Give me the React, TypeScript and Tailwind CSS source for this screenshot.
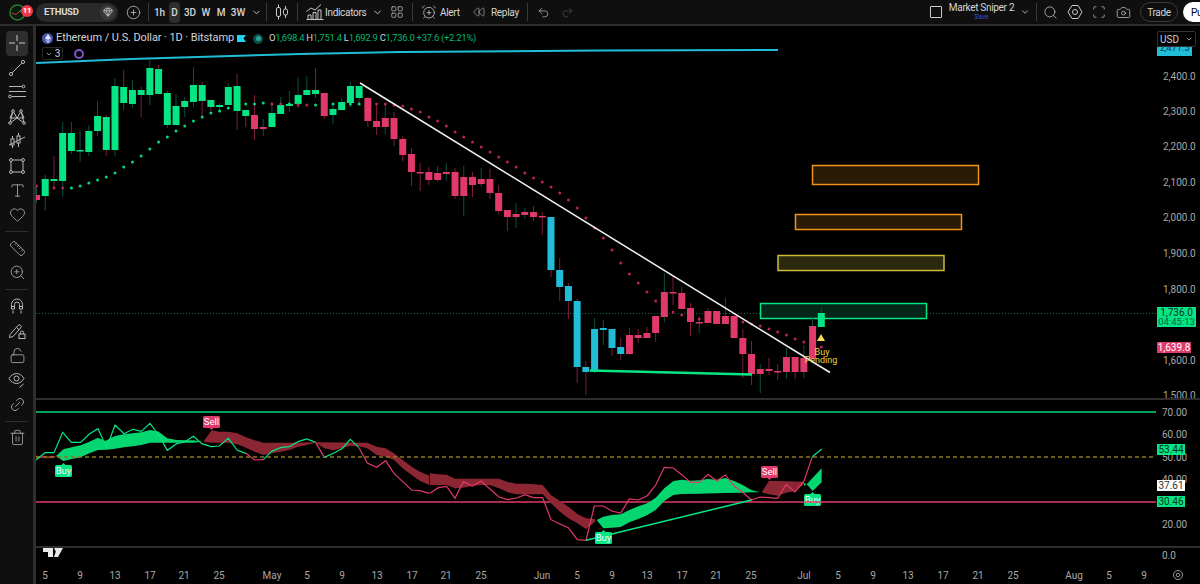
import type { ReactNode } from "react";
import {
  AlarmClockPlus,
  Camera,
  ChevronDown,
  CirclePlus,
  Gem,
  Heart,
  LayoutGrid,
  Link2,
  LockOpen,
  Redo2,
  Rewind,
  Ruler,
  Scan,
  Search,
  Trash2,
  Type,
  Undo2,
  ZoomIn,
} from "lucide-react";

const GREEN = "#05e584";
const RED = "#e03a6a";
const BLUE = "#20bcd8";
const WICK_GREEN = "#0d4f43";
const WICK_RED = "#7c1d3f";

// body top, body bottom, wick top, wick bottom, body colour, wick colour
type Bar = [number, number, number, number, "g" | "r" | "b", "g" | "r"];

const bars: Bar[] = [
  [195, 200, 186, 203, "r", "g"], [179, 196, 175, 211, "g", "g"], [179, 181, 156, 188, "g", "r"], [133, 181, 122, 197, "g", "g"],
  [133, 151, 122, 154, "g", "r"], [150, 151, 130, 162, "g", "g"], [131, 152, 125, 156, "g", "g"], [116, 131, 101, 136, "g", "g"],
  [117, 150, 115, 156, "g", "r"], [86, 150, 78, 156, "g", "g"], [87, 103, 70, 110, "g", "r"], [90, 104, 80, 108, "g", "g"],
  [90, 95, 87, 117, "g", "r"], [68, 95, 60, 105, "g", "g"], [69, 94, 65, 94, "g", "r"], [93, 125, 91, 128, "g", "r"],
  [106, 125, 94, 125, "g", "g"], [101, 107, 97, 117, "g", "g"], [85, 102, 67, 107, "g", "g"], [85, 101, 82, 116, "g", "r"],
  [100, 107, 100, 111, "g", "r"], [105, 107, 103, 112, "g", "g"], [87, 105, 83, 105, "g", "g"], [86, 111, 74, 130, "g", "r"],
  [110, 116, 110, 127, "g", "r"], [115, 129, 95, 140, "r", "r"], [127, 129, 119, 136, "r", "g"], [113, 127, 102, 127, "g", "g"],
  [105, 114, 97, 114, "g", "g"], [104, 106, 91, 112, "g", "g"], [95, 104, 77, 108, "g", "g"], [90, 95, 76, 95, "g", "g"],
  [90, 94, 68, 98, "g", "r"], [93, 116, 93, 119, "r", "r"], [109, 115, 103, 124, "g", "g"], [102, 110, 98, 110, "g", "g"],
  [86, 103, 82, 107, "g", "g"], [86, 98, 86, 103, "g", "r"], [98, 121, 97, 127, "r", "r"], [121, 127, 103, 135, "r", "r"],
  [118, 127, 103, 134, "r", "g"], [118, 139, 112, 146, "r", "r"], [139, 155, 136, 161, "r", "r"], [154, 172, 148, 186, "r", "r"],
  [172, 173, 163, 191, "r", "r"], [172, 180, 167, 185, "r", "r"], [173, 180, 166, 182, "r", "g"], [172, 174, 163, 181, "r", "g"],
  [172, 196, 168, 199, "r", "r"], [177, 196, 166, 216, "r", "g"], [177, 185, 172, 197, "r", "r"], [179, 184, 168, 187, "r", "g"],
  [179, 193, 169, 199, "r", "r"], [193, 211, 185, 214, "r", "r"], [210, 217, 210, 231, "r", "r"], [214, 217, 203, 228, "r", "g"],
  [212, 215, 208, 219, "r", "g"], [212, 217, 206, 221, "r", "r"], [216, 217, 212, 235, "r", "r"], [217, 270, 217, 277, "b", "r"],
  [270, 287, 258, 301, "b", "r"], [286, 301, 283, 319, "b", "r"], [301, 367, 299, 383, "b", "r"], [367, 372, 361, 395, "b", "r"],
  [329, 372, 318, 373, "b", "g"], [328, 330, 320, 345, "b", "g"], [329, 348, 329, 356, "b", "r"], [347, 354, 338, 360, "b", "r"],
  [335, 354, 328, 354, "r", "g"], [335, 338, 329, 343, "r", "r"], [333, 338, 327, 338, "r", "r"], [316, 333, 316, 342, "r", "g"],
  [292, 317, 273, 322, "r", "g"], [292, 293, 276, 305, "r", "r"], [293, 309, 287, 309, "r", "r"], [308, 322, 303, 336, "r", "r"],
  [322, 323, 317, 333, "r", "g"], [311, 323, 308, 323, "r", "g"], [311, 324, 311, 324, "r", "r"], [316, 324, 298, 324, "r", "g"],
  [316, 338, 313, 338, "r", "r"], [338, 354, 329, 378, "r", "r"], [354, 374, 341, 385, "r", "r"], [369, 374, 364, 393, "r", "g"],
  [369, 371, 358, 375, "r", "r"], [371, 372, 364, 380, "r", "r"], [357, 372, 348, 379, "r", "g"], [357, 372, 357, 379, "r", "r"],
  [358, 372, 345, 378, "r", "g"], [326, 359, 318, 359, "r", "g"], [313, 327, 307, 327, "g", "g"],
];

const barX = (i: number) => 36.5 + 8.72 * i;

// supertrend dots as [bar index, y]
const greenDots = [
  [4, 188], [5, 186], [6, 183], [7, 180], [8, 177], [9, 173], [10, 167], [11, 162], [12, 156], [13, 149], [14, 142],
  [15, 137], [16, 131], [17, 126], [18, 121], [19, 117], [20, 113], [21, 111], [22, 108], [24, 104], [25, 104], [26, 103],
  [29, 104], [32, 105], [34, 104], [36, 104], [37, 104],
];
const redDots = [
  [0, 186], [2, 188], [3, 188], [27, 104], [28, 104], [30, 105], [31, 105], [39, 104], [40, 104], [41, 105], [42, 106],
  [43, 109], [44, 112], [45, 117], [46, 121], [47, 126], [48, 132], [49, 137], [50, 142], [51, 147], [52, 152], [53, 157],
  [54, 162], [55, 167], [56, 173], [57, 178], [58, 182], [59, 187], [60, 193], [61, 200], [62, 208], [63, 218], [64, 228],
  [65, 238], [66, 250], [67, 263], [68, 274], [69, 283], [70, 292], [71, 301], [73, 312], [74, 315], [76, 319], [81, 322],
  [82, 324], [83, 326], [84, 329], [85, 332], [86, 335], [87, 339], [88, 342], [90, 347],
];

const priceTicks = [
  ["2,400.0", 80], ["2,300.0", 115], ["2,200.0", 150], ["2,100.0", 186], ["2,000.0", 221], ["1,900.0", 257], ["1,800.0", 293],
  ["1,600.0", 364], ["1,500.0", 399],
] as const;

const rsiTicks = [
  ["70.00", 416], ["60.00", 438], ["50.00", 461], ["40.00", 483], ["20.00", 528],
] as const;

const timeTicks = [
  ["5", 45], ["9", 80], ["13", 115], ["17", 150], ["21", 184], ["25", 219], ["May", 272], ["5", 307], ["9", 342], ["13", 377],
  ["17", 412], ["21", 446], ["25", 481], ["Jun", 542], ["5", 577], ["9", 612], ["13", 647], ["17", 682], ["21", 716], ["25", 751],
  ["Jul", 804], ["5", 838], ["9", 873], ["13", 908], ["17", 943], ["21", 978], ["25", 1013], ["Aug", 1074], ["5", 1109], ["9", 1144],
] as const;

// oscillator points were read off two crops, hence the two offsets
const left = (p: number[][]) => p.map(([x, y]) => `${x / 3 + 30},${y / 3 + 405}`).join(" ");
const right = (p: number[][]) => p.map(([x, y]) => `${x / 3 + 430},${y / 3 + 405}`).join(" ");

const rsiA = [[18, 165], [45, 143], [72, 143], [98, 82], [124, 112], [152, 112], [178, 87], [204, 71], [230, 128], [255, 60], [282, 86], [308, 73], [334, 79], [360, 55], [386, 90], [412, 136], [440, 116], [464, 111], [490, 94], [516, 116], [542, 125], [568, 123], [595, 100], [622, 136], [648, 145]];
const rsiB = [[648, 145], [674, 165], [700, 164]];
const rsiC = [[700, 164], [725, 139], [752, 128], [778, 125], [804, 110], [830, 102], [857, 112]];
const rsiD = [[857, 112], [883, 157]];
const rsiE = [[883, 157], [910, 145], [936, 131], [961, 103], [986, 127]];
const rsiF = [[986, 127], [1012, 174], [1040, 187], [1067, 167], [1092, 205], [1118, 230], [1145, 255], [1170, 257], [1198, 265]];
const rsiG = [[0, 265], [25, 248], [50, 244], [75, 280], [100, 230], [127, 243], [153, 228], [180, 252], [207, 276], [233, 284], [260, 279], [285, 269], [310, 278], [338, 278], [363, 344], [390, 357], [415, 368], [442, 404], [468, 406], [493, 303], [520, 303], [545, 318], [572, 324], [598, 282], [625, 285], [652, 272], [677, 240], [703, 187], [730, 189], [755, 209], [782, 232], [808, 232], [834, 208], [860, 228], [886, 210], [912, 243], [938, 262], [964, 285], [990, 276], [1017, 278], [1043, 280], [1068, 238], [1095, 261], [1122, 228], [1147, 155]];
const rsiH = [[1147, 155], [1175, 132]];

const bandGreenA = [[78, 153], [100, 133], [125, 127], [152, 121], [178, 110], [204, 98], [225, 108], [255, 93], [282, 88], [308, 85], [334, 82], [360, 75], [386, 80], [412, 100], [440, 105], [464, 106], [490, 106], [516, 110], [490, 113], [464, 113], [440, 113], [412, 113], [386, 113], [360, 113], [334, 120], [308, 124], [282, 127], [255, 131], [230, 134], [204, 135], [178, 145], [152, 157], [125, 162], [100, 168]];
const bandRedA = [[520, 110], [545, 76], [568, 80], [595, 80], [622, 85], [648, 97], [674, 106], [700, 113], [778, 113], [857, 112], [1012, 113], [1040, 125], [1067, 130], [1092, 145], [1118, 165], [1145, 185], [1170, 200], [1198, 212], [1198, 240], [1170, 228], [1145, 210], [1118, 190], [1092, 165], [1067, 155], [1040, 150], [1012, 130], [986, 124], [961, 122], [936, 130], [910, 136], [883, 130], [857, 113], [830, 120], [804, 125], [778, 135], [752, 140], [725, 145], [700, 150], [674, 140], [648, 128], [622, 118], [595, 113], [545, 113]];
const bandRedB = [[0, 205], [25, 208], [50, 209], [75, 221], [207, 221], [233, 231], [260, 236], [285, 236], [310, 238], [338, 240], [363, 270], [390, 288], [415, 305], [442, 327], [468, 340], [495, 342], [495, 350], [468, 372], [442, 355], [415, 340], [390, 320], [363, 295], [338, 268], [260, 268], [233, 262], [207, 250], [180, 240], [153, 240], [127, 243], [100, 248], [75, 250], [50, 240], [0, 240]];
const bandGreenB = [[500, 345], [520, 335], [545, 330], [572, 328], [598, 315], [625, 304], [652, 295], [677, 278], [703, 250], [730, 228], [755, 224], [782, 227], [808, 226], [834, 222], [860, 224], [886, 219], [912, 228], [938, 240], [964, 255], [990, 262], [964, 262], [938, 263], [886, 264], [808, 266], [755, 267], [730, 270], [703, 288], [677, 315], [652, 330], [625, 342], [598, 352], [572, 366], [545, 368], [520, 370]];
const bandRedC = [[995, 262], [1017, 227], [1122, 230], [1122, 238], [1095, 258], [1068, 263], [1043, 272], [1017, 268]];
const bandGreenC = [[1130, 238], [1175, 190], [1175, 232], [1148, 258]];

function Tag({ x, y, fill, children, color = "#000", w = 39, h = 11 }: { x?: number; y: number; fill: string; children: ReactNode; color?: string; w?: number; h?: number }) {
  const start = x ?? 1157;
  return (
    <g>
      <rect x={start} y={y} width={w} height={h} fill={fill} />
      <text x={start + w / 2} y={y + 8.5} fontSize="10" fill={color} textAnchor="middle">{children}</text>
    </g>
  );
}

function Signal({ x, y, label, fill, up }: { x: number; y: number; label: string; fill: string; up: boolean }) {
  const mid = x + 8.5;
  return (
    <g>
      <rect x={x} y={y} width={17} height={12} rx={1.5} fill={fill} />
      {up ? <path d={`M${mid - 2} ${y}L${mid} ${y - 2}L${mid + 2} ${y}Z`} fill={fill} /> : <path d={`M${mid - 2} ${y + 12}L${mid} ${y + 14}L${mid + 2} ${y + 12}Z`} fill={fill} />}
      <text x={mid} y={y + 9} fontSize="9.5" fill="#fff" textAnchor="middle">{label}</text>
    </g>
  );
}

function PriceChart() {
  return (
    <svg viewBox="36 26 1164 372" className="block h-[372px] w-full bg-black">
      <line x1="36" y1="313.5" x2="1156" y2="313.5" stroke="#0f6a4a" strokeDasharray="1 2" />
      <rect x="812.5" y="165.5" width="166" height="19" fill="#2b1a06" stroke="#f0921e" strokeWidth="1.5" />
      <rect x="795.5" y="214.5" width="166" height="15" fill="#2b1a06" stroke="#f0921e" strokeWidth="1.5" />
      <rect x="778" y="255.5" width="166" height="15" fill="#2a290e" stroke="#cdbb3c" strokeWidth="1.5" />
      <rect x="760.5" y="303.5" width="166" height="15" fill="#06291b" fillOpacity="0.9" stroke="#05e584" strokeWidth="1.5" />

      {bars.map(([top, bottom, wickTop, wickBottom, body, wick], i) => (
        <g key={i}>
          <line x1={barX(i)} y1={wickTop} x2={barX(i)} y2={wickBottom} stroke={wick === "g" ? WICK_GREEN : WICK_RED} />
          <rect x={barX(i) - 3.5} y={top} width={7} height={Math.max(bottom - top, 1.5)} fill={body === "g" ? GREEN : body === "r" ? RED : BLUE} />
        </g>
      ))}
      {greenDots.map(([i, y]) => <circle key={i} cx={barX(i)} cy={y} r={1.5} fill="#05d878" />)}
      {redDots.map(([i, y]) => <circle key={i} cx={barX(i)} cy={y} r={1.5} fill="#b92250" />)}

      <polyline points="36,63 131,59 300,54 400,52 600,50.5 778,50" fill="none" stroke={BLUE} strokeWidth="2" />
      <line x1="360" y1="83" x2="830" y2="372.5" stroke="#f2f2f2" strokeWidth="1.5" />
      <line x1="590" y1="370.5" x2="752" y2="374.5" stroke="#05e584" strokeWidth="2.5" />

      <path d="M821 334L825 341H817Z" fill="#f7e04b" />
      <text x="822" y="355" fontSize="9" fill="#e8d640" textAnchor="middle">Buy</text>
      <text x="821" y="363" fontSize="9" fill="#e8d640" textAnchor="middle">Pending</text>

      {priceTicks.map(([label, y]) => (
        <text key={label} x="1163" y={y} fontSize="10" fill="#a8a8a8">{label}</text>
      ))}
      <g>
        <rect x="1157" y="47" width="35" height="9" fill={BLUE} />
        <text x="1174.5" y="51" fontSize="9" fill="#0a3944" textAnchor="middle">2,471.5</text>
      </g>
      <rect x="1157" y="307" width="39" height="20" fill={GREEN} />
      <text x="1176.5" y="316" fontSize="10" fill="#03301e" textAnchor="middle">1,736.0</text>
      <text x="1176.5" y="325" fontSize="9.5" fill="#04663e" textAnchor="middle">04:45:13</text>
      <Tag y={342} w={34} fill={RED} color="#fff">1,639.8</Tag>
    </svg>
  );
}

function RsiChart() {
  return (
    <svg viewBox="36 400 1164 146" className="block h-[146px] w-full bg-black">
      <line x1="36" y1="412" x2="1156" y2="412" stroke="#05d878" strokeWidth="1.5" />
      <line x1="36" y1="502" x2="1156" y2="502" stroke={RED} strokeWidth="1.5" />

      <polygon points={left([[18, 153], [78, 153], [72, 160], [18, 160]])} fill="#8c2632" />
      <polygon points={left(bandGreenA)} fill="#05d670" />
      <polygon points={left(bandRedA)} fill="#8c2632" />
      <polygon points={right(bandRedB)} fill="#8c2632" />
      <polygon points={right(bandGreenB)} fill="#05d670" />
      <polygon points={right(bandRedC)} fill="#8c2632" />
      <polygon points={right(bandGreenC)} fill="#05d670" />
      <polygon points={right([[1122, 233], [1128, 238], [1122, 244]])} fill="#05d670" />

      <line x1="36" y1="457" x2="1156" y2="457" stroke="#8a7a20" strokeWidth="1.5" strokeDasharray="4 3" />

      {[rsiA, rsiC, rsiE].map((p, i) => <polyline key={i} points={left(p)} fill="none" stroke={GREEN} strokeWidth="1.2" />)}
      {[rsiB, rsiD, rsiF].map((p, i) => <polyline key={i} points={left(p)} fill="none" stroke={RED} strokeWidth="1.2" />)}
      <polyline points={right(rsiG)} fill="none" stroke={RED} strokeWidth="1.2" />
      <polyline points={right(rsiH)} fill="none" stroke={GREEN} strokeWidth="1.2" />
      <polyline points={right([[468, 406], [965, 285]])} fill="none" stroke={GREEN} strokeWidth="1.5" />

      <Signal x={203} y={416} label="Sell" fill={RED} up={false} />
      <Signal x={55} y={465} label="Buy" fill={GREEN} up />
      <Signal x={761} y={466} label="Sell" fill={RED} up={false} />
      <Signal x={595} y={532} label="Buy" fill={GREEN} up />
      <Signal x={804} y={494} label="Buy" fill={GREEN} up />
      <line x1="804" y1="502" x2="822" y2="502" stroke={RED} strokeWidth="1.5" />

      {rsiTicks.map(([label, y]) => (
        <text key={label} x="1162" y={y} fontSize="10" fill="#a8a8a8">{label}</text>
      ))}
      <Tag y={444} w={28} fill={GREEN} color="#04331f">53.44</Tag>
      <Tag y={480} w={28} fill="#fff" color="#333">37.61</Tag>
      <Tag y={496} w={28} fill={GREEN} color="#04331f">30.46</Tag>
    </svg>
  );
}

function TimeAxis() {
  return (
    <svg viewBox="36 548 1164 36" className="block h-[36px] w-full bg-black">
      <path d="M43 548H53V557H48V552H43ZM54 548H57L56 552ZM57 548H63L58 557H54Z" fill="#e8e8e8" />
      <text x="1162" y="559" fontSize="10" fill="#a8a8a8">0.0</text>
      {timeTicks.map(([label, x], i) => (
        <text key={i} x={x} y="579" fontSize="10" fill="#a8a8a8" textAnchor="middle">{label}</text>
      ))}
      <circle cx="1178" cy="575" r="4.5" fill="none" stroke="#999" />
      <circle cx="1178" cy="575" r="1.8" fill="none" stroke="#999" />
    </svg>
  );
}

const IC = "text-[#c9c9c9]";

function Sep() {
  return <div className="h-[18px] w-px shrink-0 bg-[#3a3a3a]" />;
}

function CandleIcon() {
  return (
    <svg width="18" height="18" viewBox="0 0 18 18" fill="none" stroke="#c9c9c9">
      <path d="M5.5 1.5v3M5.5 13.5v3M12.5 3v3M12.5 12v3" />
      <rect x="3.5" y="4.5" width="4" height="9" rx="1.5" />
      <rect x="10.5" y="6" width="4" height="6" rx="1.5" />
    </svg>
  );
}

function IndicatorsIcon() {
  return (
    <svg width="20" height="18" viewBox="0 0 20 18" fill="none" stroke="#c9c9c9">
      <path d="M1.5 8.5L6 5l4 2 6-5.5" />
      <path d="M1.5 16.5h17M3 16v-4h3v4M8 16V9.5h3V16M13 16V7h3v9" />
    </svg>
  );
}

function Logo() {
  return (
    <div className="relative flex w-[36px] shrink-0 items-center justify-start pl-[9px]">
      <svg width="17" height="17" viewBox="0 0 17 17">
        <circle cx="8.5" cy="8.5" r="7.5" fill="#041a0e" stroke="#2d7a35" strokeWidth="1.5" />
        <path d="M3 9l4 1.500L10 8" stroke="#d63a3a" fill="none" />
        <path d="M10 8l4-3" stroke="#2bd45f" fill="none" />
      </svg>
      <span className="absolute left-[21px] top-[1px] flex h-[12px] w-[12px] items-center justify-center rounded-full bg-[#f23645] text-[8px] font-bold text-white">11</span>
    </div>
  );
}

function TopBar() {
  return (
    <header className="flex h-6 shrink-0 items-center bg-[#0f0f0f] text-[10px] tracking-[-0.3px] text-[#d6d6d6]">
      <Logo />
      <div className="flex h-[19px] w-[82px] shrink-0 items-center justify-between rounded-full bg-[#2a2a2a] pl-2 pr-[3px] font-bold text-[#d8d8d8]">
        <span className="text-[9.5px]">ETHUSD</span>
        <span className="flex h-[15px] w-[15px] items-center justify-center rounded-full bg-[#3a3a3a]"><Gem size={10} className={IC} /></span>
      </div>
      <div className="flex w-[30px] shrink-0 justify-center"><CirclePlus size={15} strokeWidth={1.2} className={IC} /></div>
      <Sep />
      <div className="flex h-[21px] items-center text-center font-medium tracking-normal">
        <span className="w-5 pl-[1px]">1h</span>
        <span className="flex h-full w-[11px] items-center justify-center rounded-sm bg-[#2e2e2e]">D</span>
        <span className="w-5">3D</span>
        <span className="w-3">W</span>
        <span className="w-[18px]">M</span>
        <span className="w-4">3W</span>
        <span className="flex w-5 justify-center"><ChevronDown size={11} className={IC} /></span>
      </div>
      <Sep />
      <div className="flex w-[30px] shrink-0 justify-center"><CandleIcon /></div>
      <Sep />
      <div className="flex w-[27px] shrink-0 justify-end"><IndicatorsIcon /></div>
      <span className="w-[40px] shrink-0 text-center">Indicators</span>
      <span className="flex w-[24px] shrink-0 justify-center"><ChevronDown size={11} className={IC} /></span>
      <span className="flex w-[16px] shrink-0 justify-center"><LayoutGrid size={14} strokeWidth={1.2} className={IC} /></span>
      <span className="w-[7px]" />
      <Sep />
      <span className="flex w-[27px] shrink-0 justify-end pr-[3px]"><AlarmClockPlus size={16} strokeWidth={1.2} className={IC} /></span>
      <span className="w-[20px] shrink-0">Alert</span>
      <span className="flex w-[31px] shrink-0 justify-end pr-[6px]"><Rewind size={12} strokeWidth={1.2} className={IC} /></span>
      <span className="w-[26px] shrink-0">Replay</span>
      <span className="w-[10px]" />
      <Sep />
      <span className="flex w-[29px] shrink-0 justify-center pl-[2px]"><Undo2 size={13} strokeWidth={1.2} className={IC} /></span>
      <span className="flex w-[20px] shrink-0 justify-center"><Redo2 size={13} strokeWidth={1.2} className="text-[#555]" /></span>

      <div className="ml-auto flex items-center">
        <span className="flex w-[18px] shrink-0"><span className="h-[12px] w-[12px] rounded-[1px] border border-[#c9c9c9]" /></span>
        <div className="ml-[1px] flex w-[65px] shrink-0 flex-col items-center leading-none">
          <span className="whitespace-nowrap">Market Sniper 2</span>
          <span className="text-[6.5px] leading-[8px] tracking-normal text-[#3451d8]">Save</span>
        </div>
        <span className="flex w-[22px] shrink-0 justify-center"><ChevronDown size={10} className={IC} /></span>
        <Sep />
        <span className="flex w-[26px] shrink-0 justify-center"><Search size={15} strokeWidth={1.2} className={IC} /></span>
        <span className="flex w-[24px] shrink-0 justify-center">
          <svg width="16" height="16" viewBox="0 0 16 16" fill="none" stroke="#c9c9c9"><path d="M5 1.500h6L15 8l-4 6.500H5L1 8Z" /><circle cx="8" cy="8" r="2.500" /></svg>
        </span>
        <span className="flex w-[24px] shrink-0 justify-center"><Scan size={14} strokeWidth={1.2} className={IC} /></span>
        <span className="flex w-[24px] shrink-0 justify-center"><Camera size={15} strokeWidth={1.2} className={IC} /></span>
        <span className="ml-[5px] flex h-[20px] w-[38px] shrink-0 items-center justify-center rounded-full border border-[#3a3a3a]">Trade</span>
        <span className="ml-[5px] flex h-[20px] w-[17px] shrink-0 items-center overflow-hidden rounded-l-full bg-white pl-2 text-black">Pu</span>
      </div>
    </header>
  );
}

function ToolDivider() {
  return <div className="mx-[5px] my-[4px] h-px bg-[#2e2e2e]" />;
}

function Tool({ children, active }: { children: ReactNode; active?: boolean }) {
  return (
    <div className={`mx-[6px] flex h-[24.5px] w-[22px] items-center justify-center rounded ${active ? "bg-[#2e2e2e]" : ""}`}>{children}</div>
  );
}

function Toolbar() {
  const s = { size: 17, strokeWidth: 1.1, className: "text-[#b8b8b8]" };
  return (
    <aside className="w-[33px] shrink-0 bg-[#0f0f0f] pt-[5px]">
      <Tool active>
        <svg width="16" height="16" viewBox="0 0 16 16" stroke="#c9c9c9"><path d="M8 0v6M8 10v6M0 8h6M10 8h6" /></svg>
      </Tool>
      <Tool>
        <svg width="18" height="18" viewBox="0 0 18 18" fill="none" stroke="#b8b8b8"><circle cx="3" cy="15" r="1.6" /><circle cx="15" cy="3" r="1.6" /><path d="M4.200 13.800L13.800 4.200" /></svg>
      </Tool>
      <Tool>
        <svg width="18" height="18" viewBox="0 0 18 18" fill="none" stroke="#b8b8b8"><path d="M1 3.500h13M1 8.500h17M3.500 13.500H18" /><circle cx="15.500" cy="3.500" r="1.400" /><circle cx="2" cy="13.500" r="1.400" /></svg>
      </Tool>
      <Tool>
        <svg width="18" height="18" viewBox="0 0 18 18" fill="none" stroke="#b8b8b8"><path d="M2 15L5 3l4 7 4-7 3 12M5 3l-3 7 7 0 7 0-3-7M2 15l7-5 7 5" /><circle cx="5" cy="3" r="1.300" fill="#0f0f0f" /><circle cx="13" cy="3" r="1.300" fill="#0f0f0f" /><circle cx="2" cy="15" r="1.300" fill="#0f0f0f" /><circle cx="16" cy="15" r="1.300" fill="#0f0f0f" /></svg>
      </Tool>
      <Tool>
        <svg width="18" height="18" viewBox="0 0 18 18" fill="none" stroke="#b8b8b8"><rect x="3" y="7" width="3" height="6" /><rect x="9" y="4" width="3" height="7" /><path d="M4.500 4v3M4.500 13v3M10.500 1v3M10.500 11v4M1 13L17 5" /></svg>
      </Tool>
      <Tool>
        <svg width="18" height="18" viewBox="0 0 18 18" fill="none" stroke="#b8b8b8"><rect x="3" y="3" width="12" height="12" /><circle cx="3" cy="3" r="1.500" fill="#0f0f0f" /><circle cx="15" cy="3" r="1.500" fill="#0f0f0f" /><circle cx="3" cy="15" r="1.500" fill="#0f0f0f" /><circle cx="15" cy="15" r="1.500" fill="#0f0f0f" /></svg>
      </Tool>
      <Tool><Type {...s} /></Tool>
      <Tool><Heart {...s} /></Tool>
      <ToolDivider />
      <Tool><Ruler {...s} /></Tool>
      <Tool><ZoomIn {...s} /></Tool>
      <ToolDivider />
      <Tool>
        <svg width="18" height="18" viewBox="0 0 18 18" fill="none" stroke="#b8b8b8"><path d="M3.500 12V7.500a5.500 5.500 0 0 1 11 0V12h-3V7.500a2.500 2.500 0 0 0-5 0V12ZM3.500 9.500h3M11.500 9.500h3M5 13.500v3M13 13.500v3" /></svg>
      </Tool>
      <Tool>
        <svg width="18" height="18" viewBox="0 0 18 18" fill="none" stroke="#b8b8b8"><path d="M2 12.500L10 3.500a1.800 1.800 0 0 1 2.700 2.400L5 14.500l-3.500 1ZM8.500 5.500l2.500 2.200" /><rect x="11" y="12" width="6" height="4.500" /><path d="M12.500 12v-1.500a1.500 1.500 0 0 1 3 0V12" /></svg>
      </Tool>
      <Tool><LockOpen {...s} /></Tool>
      <Tool>
        <svg width="18" height="18" viewBox="0 0 18 18" fill="none" stroke="#b8b8b8"><path d="M1 7.500C3 4 6 2.500 8.500 2.500S14 4 16 7.500C14 11 11 12.500 8.500 12.500S3 11 1 7.500Z" /><circle cx="8.500" cy="7.500" r="2.500" /><path d="M11.500 16.500l4-3.500" /></svg>
      </Tool>
      <Tool><Link2 {...s} className="-rotate-45 text-[#b8b8b8]" /></Tool>
      <ToolDivider />
      <Tool><Trash2 {...s} /></Tool>
    </aside>
  );
}

function Legend() {
  return (
    <div className="absolute left-[6px] top-[5px] text-[#d1d4dc]">
      <div className="flex h-[15px] items-center whitespace-nowrap">
        <span className="flex h-[11px] w-[11px] items-center justify-center rounded-full bg-[#4a55a8]">
          <svg width="6" height="9" viewBox="0 0 6 9" fill="#dfe3ff"><path d="M3 0L6 4.500 3 6 0 4.500ZM0 5.300L3 7 6 5.300 3 9Z" /></svg>
        </span>
        <span className="ml-[3px] w-[176px] text-[11px] tracking-[-0.1px]">Ethereum / U.S. Dollar · 1D · Bitstamp</span>
        <svg width="9" height="9" viewBox="0 0 9 9" className="ml-[5px]"><path d="M0 1H9L6.500 4.500 9 8H0Z" fill="#22d3ee" /></svg>
        <span className="ml-[7px] flex h-[10px] w-[10px] items-center justify-center rounded-full bg-[#0f4f48]"><span className="h-[5px] w-[5px] rounded-full bg-[#26a69a]" /></span>
        <span className="ml-[6px] text-[9.5px] tracking-[-0.3px] text-[#05b86e]">
          <span className="text-[#d1d4dc]">O</span>1,698.4 <span className="text-[#d1d4dc]">H</span>1,751.4 <span className="text-[#d1d4dc]">L</span>1,692.9 <span className="text-[#d1d4dc]">C</span>1,736.0 +37.6 (+2.21%)
        </span>
      </div>
      <div className="mt-[1px] flex items-center">
        <span className="flex h-[13px] w-[21px] items-center justify-center gap-[2px] rounded-[2px] border border-[#2a2a2a] text-[10px]"><ChevronDown size={8} />3</span>
        <span className="ml-[11px] h-[10px] w-[10px] rounded-full border-2 border-[#7a55c7]" />
      </div>
    </div>
  );
}

export default function App() {
  return (
    <div className="flex h-[584px] w-[1200px] flex-col overflow-hidden bg-[#2e2e2e] font-[Roboto,sans-serif]">
      <TopBar />
      <div className="mt-[2px] flex min-h-0 flex-1">
        <Toolbar />
        <div className="relative ml-[3px] flex min-w-0 flex-1 flex-col gap-[2px]">
          <PriceChart />
          <RsiChart />
          <TimeAxis />
          <Legend />
          <div className="absolute left-[1121px] top-[5px] flex h-[16px] w-[39px] items-center justify-between rounded-[2px] border border-[#333] bg-black pl-[2px] pr-[2px] text-[10px] text-[#d1d4dc]">
            USD <ChevronDown size={8} />
          </div>
        </div>
      </div>
    </div>
  );
}
